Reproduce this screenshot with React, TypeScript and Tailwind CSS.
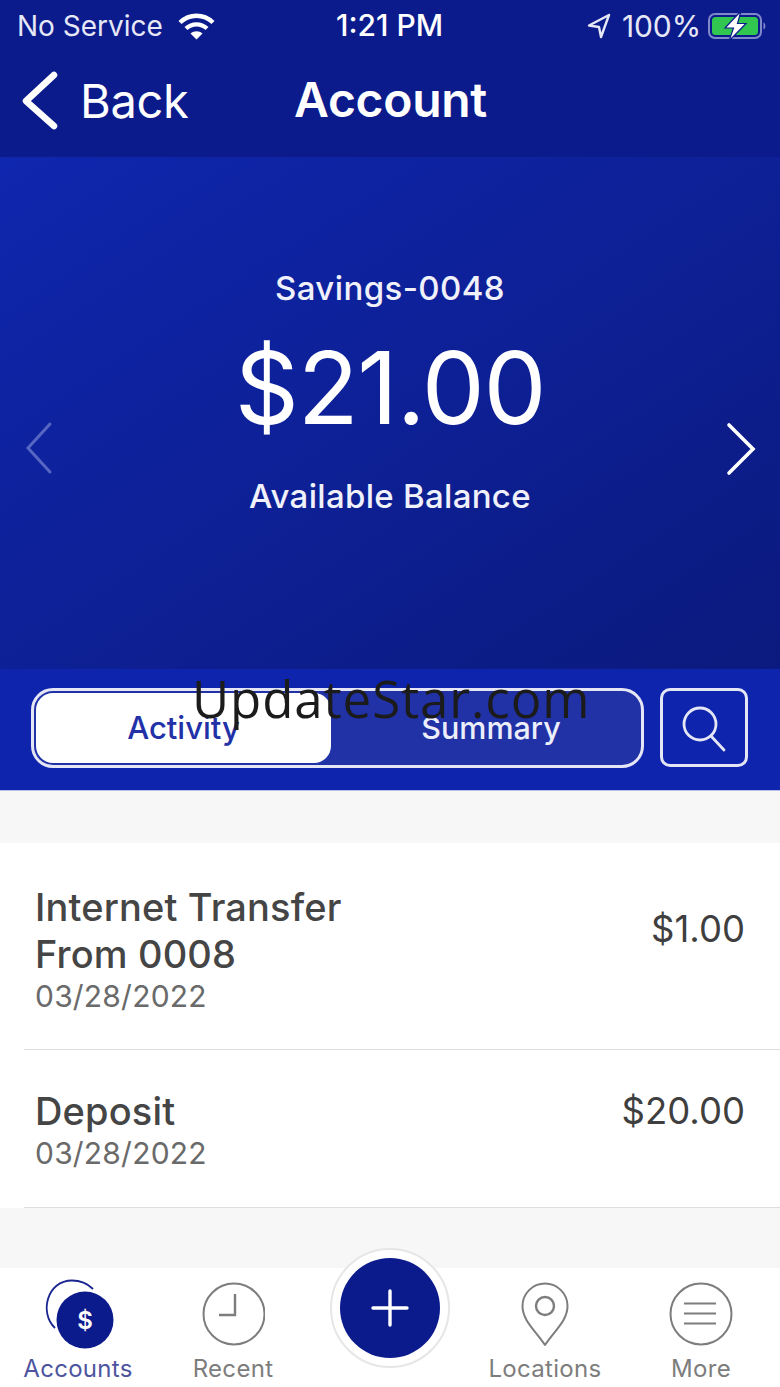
import React from "react";

const font = "[font-family:Inter,'Liberation_Sans',sans-serif]";

function Wifi() {
  return (
    <svg width="37" height="28" viewBox="0 0 37 28" fill="none" stroke="white" strokeWidth="4.4">
      <path d="M2 10.5C11.5 1.5 25.5 1.5 35 10.5" />
      <path d="M8 16.5C14 11 23 11 29 16.5" />
      <path d="M18.5 27.5L12.5 21.5C16 18.5 21 18.5 24.5 21.5Z" fill="white" stroke="none" />
    </svg>
  );
}

function Battery() {
  return (
    <svg width="60" height="30" viewBox="0 0 60 30">
      <rect x="1" y="3" width="52" height="24" rx="6" fill="none" stroke="#7f88c9" strokeWidth="2" />
      <rect x="4" y="6" width="46" height="18" rx="3.500" fill="#30c64f" />
      <path d="M55.500 11.500c2.500 .5 2.500 6.500 0 7z" fill="#7f88c9" />
      <path d="M33 0L17 17H25.500L21 30L38 12.500H29.500Z" fill="white" stroke="#0c1b8c" strokeWidth="1.200" />
    </svg>
  );
}

function NavLabel({ children, active }: { children: React.ReactNode; active?: boolean }) {
  return (
    <span className={`text-[24px] leading-7 tracking-[0.3px] ${active ? "text-[#4e559f]" : "text-[#7d7d7d]"}`}>{children}</span>
  );
}

function Tx({ title, date, amount, top, amountTop }: { title: string[]; date: string; amount: string; top: string; amountTop: string }) {
  return (
    <div className={`ml-6 flex justify-between border-b border-[#dedede] pr-[35px] ${top}`}>
      <div className="flex flex-col pl-[11px] text-[#454545]">
        {title.map((t) => (
          <span key={t} className="text-[38px] leading-[47px] font-medium tracking-[0.150px]">{t}</span>
        ))}
        <span className="text-[30px] leading-[36px] text-[#6a6a6a] tracking-[0.2px]">{date}</span>
      </div>
      <span className={`text-[36.500px] leading-[47px] text-[#3f3f3f] ${amountTop}`}>{amount}</span>
    </div>
  );
}

export default function App() {
  return (
    <div className={`relative flex h-[1387px] w-[780px] flex-col overflow-hidden bg-[#f7f7f7] ${font}`}>
      <header className="flex h-[157px] flex-col bg-[#0c1b8c] text-white">
        <div className="relative flex h-[50px] items-center justify-between pl-[17px] pr-[12px] pt-0.5">
          <div className="flex items-center gap-[15px]">
            <span className="text-[28px] leading-8 text-[#e6e8f6]">No Service</span>
            <Wifi />
          </div>
          <span className="absolute left-[336px] top-[9px] text-[30px] leading-8 font-medium">1:21 PM</span>
          <div className="flex items-center gap-[7px]">
            <svg width="24" height="26" viewBox="0 0 24 26" fill="none" stroke="#e6e8f6" strokeWidth="2.400" strokeLinejoin="round" className="mr-[4px]">
              <path d="M22 2L2 12.500L12 14L14 24Z" />
            </svg>
            <span className="text-[30px] leading-8 text-[#e6e8f6] tracking-[-0.1px]">100%</span>
            <Battery />
          </div>
        </div>
        <div className="relative flex h-[100px] items-center">
          <svg width="38" height="60" viewBox="0 0 38 60" fill="none" stroke="white" strokeWidth="6.500" strokeLinecap="round" strokeLinejoin="round" className="ml-[21px] mt-[1px]">
            <path d="M33 4L5 30L33 55" />
          </svg>
          <span className="ml-[21px] mt-[2px] text-[47px] leading-[60px] tracking-[-0.3px]">Back</span>
          <span className="absolute left-[294px] top-[20px] text-[48px] leading-[60px] font-semibold tracking-[-0.3px]">Account</span>
        </div>
      </header>

      <section className="relative flex h-[512px] flex-col items-center bg-gradient-to-br from-[#0f26ae] to-[#0b1a7e] text-white">
        <span className="mt-[111px] text-[33px] leading-[40px] font-medium text-[#f0f1fa] tracking-[0.4px]">Savings-0048</span>
        <span className="mt-[20px] text-[100px] leading-[120px] tracking-[-1.300px]">$21.00</span>
        <span className="mt-[28px] text-[33px] leading-[40px] font-medium text-[#f0f1fa] tracking-[0.3px]">Available Balance</span>
        <svg width="28" height="54" viewBox="0 0 28 54" fill="none" stroke="#5666c2" strokeWidth="3" strokeLinecap="round" className="absolute left-[25px] top-[264px]">
          <path d="M25 3L3 27L25 51" />
        </svg>
        <svg width="30" height="54" viewBox="0 0 30 54" fill="none" stroke="white" strokeWidth="3.600" strokeLinecap="round" className="absolute left-[726px] top-[265px]">
          <path d="M3 3L27 27L3 51" />
        </svg>
      </section>

      <section className="flex h-[122px] items-start gap-[16px] border-b border-[#b9bde8] bg-[#0f24ad] pl-[31px] pt-[19px]">
        <div className="flex h-[80px] w-[613px] rounded-[22px] border-[3px] border-[#e4e6f6] bg-[#2132a6] p-[2px]">
          <div className="flex h-[70px] w-[295px] items-center justify-center rounded-[17px] bg-white text-[31px] font-medium text-[#2231a8]">Activity</div>
          <div className="flex flex-1 items-center justify-center pl-[12px] text-[30.500px] font-medium text-[#eceefa]">Summary</div>
        </div>
        <div className="flex h-[79px] w-[88px] items-center justify-center rounded-[10px] border-[3px] border-[#e4e6f6]">
          <svg width="46" height="48" viewBox="0 0 46 48" fill="none" stroke="#e4e6f6" strokeWidth="2.800" strokeLinecap="round">
            <circle cx="19" cy="20" r="16" />
            <path d="M30 32L43 46" />
          </svg>
        </div>
      </section>

      <div className="h-[52px]" />

      <section className="bg-white">
        <Tx top="h-[207px] pt-[41px]" amountTop="mt-[22px]" title={["Internet Transfer", "From 0008"]} date="03/28/2022" amount="$1.00" />
        <Tx top="h-[158px] pt-[38px]" amountTop="" title={["Deposit"]} date="03/28/2022" amount="$20.00" />
      </section>

      <nav className="absolute bottom-0 left-0 h-[119px] w-[780px] bg-white">
        <div className="absolute left-[24px] top-[11px] flex w-[108px] flex-col items-center">
          <svg width="72" height="70" viewBox="0 0 72 70" className="mb-[4px] ml-[1px]">
            <path d="M12 49C-4 34 4 1.500 29 1.500C36 1.500 44 4 50 10" fill="none" stroke="#1a2590" strokeWidth="1.800" />
            <circle cx="42" cy="41" r="28.500" fill="#0c1b8c" />
            <text x="42" y="50" textAnchor="middle" fill="white" fontSize="24" fontWeight="600" fontFamily="Inter">$</text>
          </svg>
          <div className="mt-[2px]"><NavLabel active>Accounts</NavLabel></div>
        </div>
        <div className="absolute left-[193px] top-[14px] flex w-[80px] flex-col items-center">
          <svg width="64" height="64" viewBox="0 0 64 64" fill="none" stroke="#7d7d7d" strokeWidth="2">
            <circle cx="33" cy="32" r="30.500" />
            <path d="M34 12V33H18" strokeWidth="2.400" />
          </svg>
          <div className="mt-[9px]"><NavLabel>Recent</NavLabel></div>
        </div>
        <div className="absolute left-[489px] top-[14px] flex w-[112px] flex-col items-center">
          <svg width="48" height="64" viewBox="0 0 48 64" fill="none" stroke="#7d7d7d" strokeWidth="2">
            <path d="M24 63C15 49 1.500 39 1.500 24A22.500 22.500 0 0 1 46.500 24C46.500 39 33 49 24 63Z" strokeLinejoin="round" />
            <circle cx="24" cy="24" r="9" strokeWidth="2.400" />
          </svg>
          <div className="mt-[9px]"><NavLabel>Locations</NavLabel></div>
        </div>
        <div className="absolute left-[669px] top-[14px] flex w-[64px] flex-col items-center">
          <svg width="64" height="64" viewBox="0 0 64 64" fill="none" stroke="#7d7d7d" strokeWidth="2">
            <circle cx="32" cy="32" r="30.500" />
            <path d="M15 21.500H47M15 31.500H47M15 41.500H47" strokeWidth="2.200" />
          </svg>
          <div className="mt-[9px]"><NavLabel>More</NavLabel></div>
        </div>
      </nav>

      <div className="absolute left-[330px] top-[1248px] flex h-[120px] w-[120px] items-center justify-center rounded-full border-2 border-[#e6e6e6] bg-white">
        <div className="flex h-[100px] w-[100px] items-center justify-center rounded-full bg-[#0c1b8c]">
          <svg width="38" height="38" viewBox="0 0 38 38" stroke="white" strokeWidth="3.400" strokeLinecap="round">
            <path d="M19 2V36M2 19H36" />
          </svg>
        </div>
      </div>

      <div className="absolute left-[192px] top-[664px] text-[51px] leading-[68px] text-[#1b1b1b] [font-family:'Open_Sans',sans-serif] tracking-[0.900px]">UpdateStar.com</div>
    </div>
  );
}
